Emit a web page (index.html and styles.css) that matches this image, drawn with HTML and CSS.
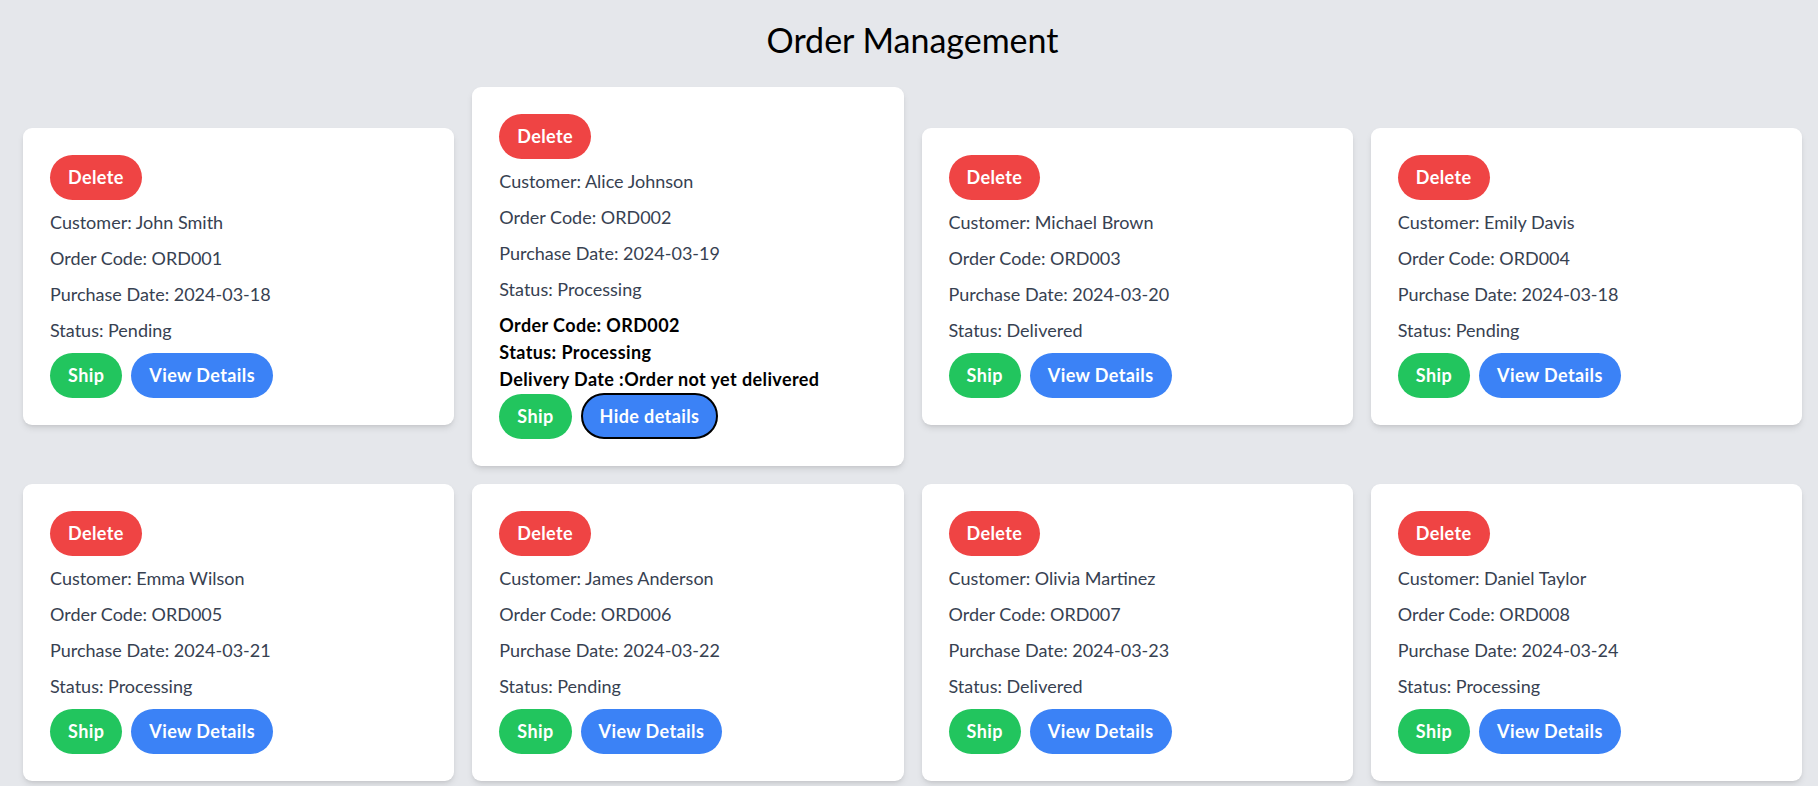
FILE: index.html
```html
<!DOCTYPE html>
<html lang="en">
<head>
<meta charset="utf-8">
<title>Order Management</title>
<link rel="stylesheet" href="styles.css">
</head>
<body>
<div class="page">
  <h1 class="title">Order Management</h1>
  <div class="grid">
    <div class="card">
      <button class="btn btn-red">Delete</button>
      <p class="line">Customer: John Smith</p>
      <p class="line">Order Code: ORD001</p>
      <p class="line">Purchase Date: 2024-03-18</p>
      <p class="line">Status: Pending</p>
      <div class="actions"><button class="btn btn-green">Ship</button><button class="btn btn-blue">View Details</button></div>
    </div>
    <div class="card">
      <button class="btn btn-red">Delete</button>
      <p class="line">Customer: Alice Johnson</p>
      <p class="line">Order Code: ORD002</p>
      <p class="line">Purchase Date: 2024-03-19</p>
      <p class="line">Status: Processing</p>
      <div class="details">
        <div>Order Code: ORD002</div>
        <div>Status: Processing</div>
        <div>Delivery Date :Order not yet delivered</div>
      </div>
      <div class="actions"><button class="btn btn-green">Ship</button><button class="btn btn-blue btn-active">Hide details</button></div>
    </div>
    <div class="card">
      <button class="btn btn-red">Delete</button>
      <p class="line">Customer: Michael Brown</p>
      <p class="line">Order Code: ORD003</p>
      <p class="line">Purchase Date: 2024-03-20</p>
      <p class="line">Status: Delivered</p>
      <div class="actions"><button class="btn btn-green">Ship</button><button class="btn btn-blue">View Details</button></div>
    </div>
    <div class="card">
      <button class="btn btn-red">Delete</button>
      <p class="line">Customer: Emily Davis</p>
      <p class="line">Order Code: ORD004</p>
      <p class="line">Purchase Date: 2024-03-18</p>
      <p class="line">Status: Pending</p>
      <div class="actions"><button class="btn btn-green">Ship</button><button class="btn btn-blue">View Details</button></div>
    </div>
    <div class="card">
      <button class="btn btn-red">Delete</button>
      <p class="line">Customer: Emma Wilson</p>
      <p class="line">Order Code: ORD005</p>
      <p class="line">Purchase Date: 2024-03-21</p>
      <p class="line">Status: Processing</p>
      <div class="actions"><button class="btn btn-green">Ship</button><button class="btn btn-blue">View Details</button></div>
    </div>
    <div class="card">
      <button class="btn btn-red">Delete</button>
      <p class="line">Customer: James Anderson</p>
      <p class="line">Order Code: ORD006</p>
      <p class="line">Purchase Date: 2024-03-22</p>
      <p class="line">Status: Pending</p>
      <div class="actions"><button class="btn btn-green">Ship</button><button class="btn btn-blue">View Details</button></div>
    </div>
    <div class="card">
      <button class="btn btn-red">Delete</button>
      <p class="line">Customer: Olivia Martinez</p>
      <p class="line">Order Code: ORD007</p>
      <p class="line">Purchase Date: 2024-03-23</p>
      <p class="line">Status: Delivered</p>
      <div class="actions"><button class="btn btn-green">Ship</button><button class="btn btn-blue">View Details</button></div>
    </div>
    <div class="card">
      <button class="btn btn-red">Delete</button>
      <p class="line">Customer: Daniel Taylor</p>
      <p class="line">Order Code: ORD008</p>
      <p class="line">Purchase Date: 2024-03-24</p>
      <p class="line">Status: Processing</p>
      <div class="actions"><button class="btn btn-green">Ship</button><button class="btn btn-blue">View Details</button></div>
    </div>
  </div>
</div>
</body>
</html>
```

FILE: styles.css
```css
* { box-sizing: border-box; }
html, body { margin: 0; padding: 0; }
body {
  background: #e5e7eb;
  font-family: "Lato", "Open Sans", sans-serif;
  font-size: 18px;
  line-height: 27px;
  color: #000;
}
.page {
  padding: 17px 16px 18px 23px;
}
.title {
  margin: 0 0 25px;
  text-align: center;
  font-size: 34px;
  line-height: 45px;
  font-weight: 400;
}
.grid {
  display: grid;
  grid-template-columns: repeat(4, 1fr);
  gap: 18px;
  align-items: center;
}
.card {
  background: #fff;
  border-radius: 9px;
  padding: 27px;
  box-shadow: 0 4px 7px -1px rgba(0,0,0,0.1), 0 2px 4px -2px rgba(0,0,0,0.1);
}
.line {
  margin: 9px 0;
  color: #374151;
}
.details {
  font-weight: 700;
  color: #000;
  letter-spacing: 0.4px;
}
.actions {
  display: flex;
  gap: 9px;
  align-items: center;
}
.btn {
  display: inline-block;
  font-family: inherit;
  font-size: 18px;
  line-height: 27px;
  font-weight: 700;
  letter-spacing: 0.4px;
  color: #fff;
  border: 0;
  border-radius: 9999px;
  padding: 9px 18px;
  cursor: pointer;
}
.btn-red { background: #ef4444; }
.btn-green { background: #22c55e; }
.btn-blue { background: #3b82f6; }
.btn-active {
  border: 2px solid #000;
  padding: 7.5px 17px;
}
```
